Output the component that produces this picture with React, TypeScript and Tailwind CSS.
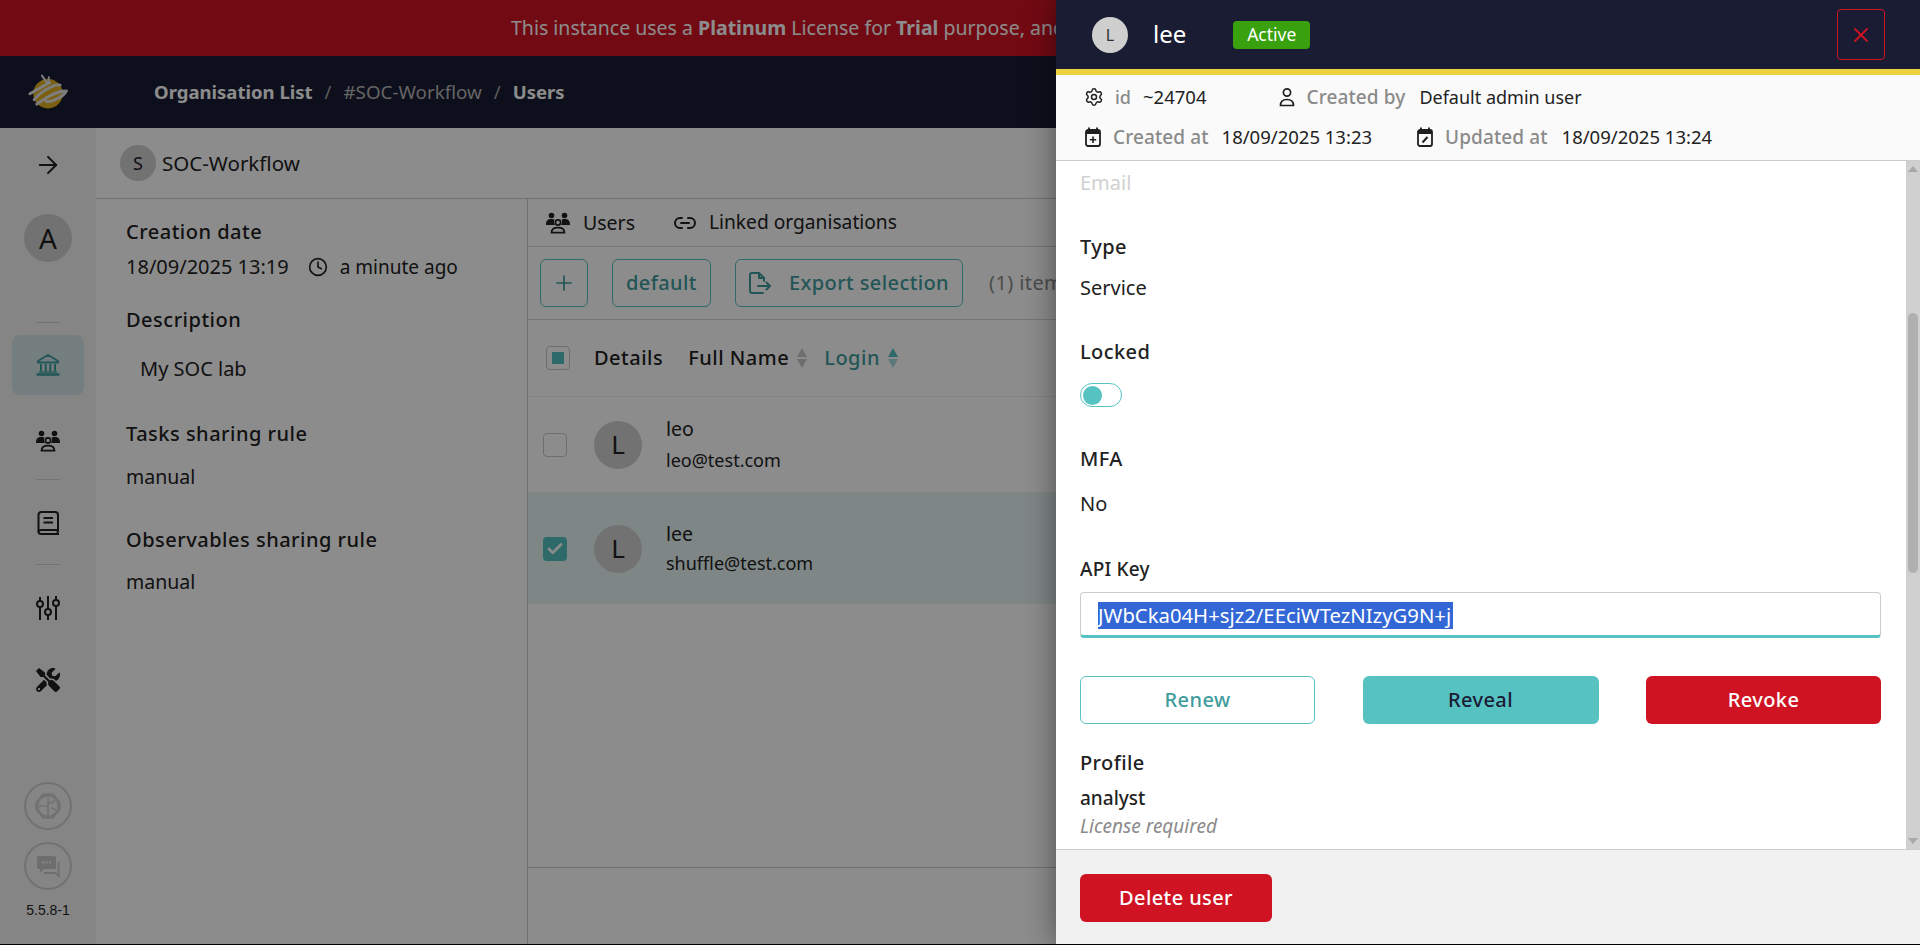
import React from 'react';
import { ArrowRight, Clock, Link2, Plus, Settings, Check, X } from 'lucide-react';
import { FaTools } from 'react-icons/fa';

const Logo = () => (
  <svg width="42" height="38" viewBox="0 0 48 44" fill="none">
    <circle cx="24" cy="24" r="17" fill="#e2b01f" />
    <g stroke="#e4e4e4" strokeWidth="3.4" strokeLinecap="round">
      <path d="M3 24 L26 11 M8 31 C12 25 30 12 38 14 M11 36 C20 30 34 20 45 21 C43 26 30 34 22 33" />
      <path d="M17 3 L24 13 M25 5 L24 12" strokeWidth="2.4" />
    </g>
  </svg>
);

const BankIcon = () => (
  <svg width="24" height="24" viewBox="0 0 24 24" fill="none" stroke="currentColor" strokeWidth="2">
    <path d="M12 2 L22 8 V9.5 H2 V8 Z" strokeLinejoin="round" />
    <path d="M5 11 V18 M9.7 11 V18 M14.3 11 V18 M19 11 V18" />
    <path d="M0.5 21.5 H23.5" strokeWidth="2.6" />
    <path d="M3 19 H21" strokeWidth="1.4" />
  </svg>
);

const GroupIcon = () => (
  <svg width="24" height="24" viewBox="0 0 24 24" fill="currentColor">
    <circle cx="5.5" cy="4.5" r="2.8" />
    <circle cx="18.5" cy="4.5" r="2.8" />
    <path d="M0 14 C0 9 2 8 5.5 8 C7 8 8 8.3 8.6 8.8 C7.6 10 7.8 12.2 9 14 Z" />
    <path d="M24 14 C24 9 22 8 18.5 8 C17 8 16 8.3 15.4 8.8 C16.4 10 16.2 12.2 15 14 Z" />
    <circle cx="12" cy="11.5" r="2.6" fill="none" stroke="currentColor" strokeWidth="1.7" />
    <path d="M5.5 21.7 C5.5 18 8 16.6 12 16.6 C16 16.6 18.5 18 18.5 21.7 Z" fill="none" stroke="currentColor" strokeWidth="1.7" />
  </svg>
);

const BookIcon = () => (
  <svg width="24" height="24" viewBox="0 0 24 24" fill="none" stroke="currentColor" strokeWidth="2">
    <path d="M22 19 H5.5 C3 19 2.5 20 2.5 21 C2.5 22.4 3.5 23 5.5 23 H23" />
    <path d="M2.5 21 V4 C2.5 2 3.5 1 5.5 1 H19 C21 1 22 2 22 4 V19 L21.5 22" />
    <path d="M7.5 7 H17 M7.5 11.5 H17" strokeWidth="2.2" />
  </svg>
);

const SlidersIcon = () => (
  <svg width="24" height="24" viewBox="0 0 24 24" fill="none" stroke="currentColor" strokeWidth="2">
    <path d="M4 1 V5 M4 11 V24 M12 0 V13 M12 19 V24 M20 0 V4 M20 10 V24" />
    <circle cx="4" cy="8" r="3" />
    <circle cx="12" cy="16" r="3" />
    <circle cx="20" cy="7" r="3" />
  </svg>
);

const BrainIcon = () => (
  <svg width="26" height="26" viewBox="0 0 26 26" fill="none">
    <path d="M8 1 H18 L25 10 V16 L18 25 H8 L1 16 V10 Z" fill="#cfcfcf" stroke="#cfcfcf" strokeWidth="1.5" strokeLinejoin="round" />
    <circle cx="13" cy="13" r="9.5" fill="#f2f2f2" />
    <path d="M13 3.5 V22.5 M4 14 C8 11 10 14 13 13 M13 9 C15 11 18 10 20 7 M16 15 C18 15 20 17 21 17" stroke="#cfcfcf" strokeWidth="1.6" />
  </svg>
);

const ChatIcon = () => (
  <svg width="24" height="24" viewBox="0 0 24 24" fill="none">
    <path d="M3 2 H18 C19.5 2 20 3 20 4 V13 C20 14.5 19 15 18 15 H8 L4 19 V15 H3 C1.5 15 1 14 1 13 V4 C1 3 1.5 2 3 2 Z" fill="#c9c9c9" />
    <circle cx="7" cy="8.5" r="1.2" fill="#f2f2f2" />
    <circle cx="10.5" cy="8.5" r="1.2" fill="#f2f2f2" />
    <circle cx="14" cy="8.5" r="1.2" fill="#f2f2f2" />
    <path d="M22.5 8 V18 L23 22 L19 19 H8" stroke="#c9c9c9" strokeWidth="1.8" />
  </svg>
);

const ExportIcon = () => (
  <svg width="24" height="24" viewBox="0 0 24 24" fill="none" stroke="currentColor" strokeWidth="2" strokeLinecap="round" strokeLinejoin="round">
    <path d="M15 22 H4 C3 22 2 21 2 20 V4 C2 3 3 2 4 2 H11 L16 7 V10" />
    <path d="M11 2 V7 H16" />
    <path d="M10 15 H22 M18.5 11.5 L22 15 L18.5 18.5" />
  </svg>
);

const PersonIcon = () => (
  <svg width="20" height="20" viewBox="0 0 20 20" fill="none" stroke="#1f1f1f" strokeWidth="1.7">
    <circle cx="10" cy="5.5" r="3.6" />
    <path d="M3.5 18.5 C3.5 14.5 6 12.5 10 12.5 C14 12.5 16.5 14.5 16.5 18.5 Z" />
  </svg>
);

const CalIcon = ({ edit }: { edit?: boolean }) => (
  <svg width="18" height="20" viewBox="0 0 18 20" fill="none">
    <rect x="2" y="3" width="14" height="16" rx="2" stroke="#1f1f1f" strokeWidth="1.8" />
    <path d="M2 3 H16 V7 H2 Z" fill="#1f1f1f" />
    <path d="M5 0.5 V4 M13 0.5 V4" stroke="#1f1f1f" strokeWidth="1.8" />
    {edit ? (
      <path d="M6.5 15.5 L11.5 10" stroke="#1f1f1f" strokeWidth="2" />
    ) : (
      <path d="M9 9.5 V16 M5.8 12.8 H12.2" stroke="#1f1f1f" strokeWidth="1.6" />
    )}
  </svg>
);

const SortArrows = ({ active }: { active?: boolean }) => (
  <span className="flex flex-col gap-[2px] ml-[8px]">
    <span className={`w-0 h-0 border-x-[5px] border-x-transparent border-b-[9px] ${active ? 'border-b-[#56c2c2]' : 'border-b-[#c8c8c8]'}`}></span>
    <span className={`w-0 h-0 border-x-[5px] border-x-transparent border-t-[9px] ${active ? 'border-t-[#a8dcdc]' : 'border-t-[#c8c8c8]'}`}></span>
  </span>
);

const Avatar = ({ letter }: { letter: string }) => (
  <div className="w-12 h-12 rounded-full bg-[#cfcfcf] flex items-center justify-center text-[26px] text-[#222] shrink-0">{letter}</div>
);

const rows = [
  { name: 'leo', email: 'leo@test.com', selected: false },
  { name: 'lee', email: 'shuffle@test.com', selected: true },
];

const MainPage = () => (
  <div className="h-[944px] flex flex-col bg-white">
    <div className="h-14 shrink-0 bg-[#d01323] text-white text-[19.5px] leading-[56px] pl-[511px] whitespace-nowrap overflow-hidden">
      This instance uses a <b>Platinum</b> License for <b>Trial</b> purpose, and
    </div>
    <div className="h-[72px] shrink-0 bg-[#1a1c33] flex items-center text-[18.5px] text-white">
      <div className="w-[154px] pl-[27px]"><Logo /></div>
      <span className="font-bold">Organisation List</span>
      <span className="mx-[12px] text-[#a8a8a8]">/</span>
      <span className="text-[#b8b8b8] text-[18.8px]">#SOC-Workflow</span>
      <span className="mx-[12px] text-[#a8a8a8]">/</span>
      <span className="font-bold">Users</span>
    </div>
    <div className="flex-1 flex min-h-0">
      <aside className="w-24 shrink-0 bg-[#f2f2f2] flex flex-col items-center pt-[25px] pb-6 text-[#1f1f1f]">
        <ArrowRight size={28} strokeWidth={1.7} className="my-[-2px]" />
        <div className="w-12 h-12 mt-[37px] rounded-full bg-[#cfcfcf] flex items-center justify-center text-[28px]">A</div>
        <div className="w-6 h-px bg-[#d0d0d0] mt-[60px]"></div>
        <div className="w-[72px] h-[60px] mt-3 rounded-lg bg-[#d3e6e6] flex items-center justify-center text-[#3f9c9c]"><BankIcon /></div>
        <div className="mt-[34px]"><GroupIcon /></div>
        <div className="w-6 h-px bg-[#d0d0d0] mt-[26px]"></div>
        <div className="mt-[31px]"><BookIcon /></div>
        <div className="w-6 h-px bg-[#d0d0d0] mt-[29px]"></div>
        <div className="mt-[31px]"><SlidersIcon /></div>
        <div className="mt-[48px]"><FaTools size={24} /></div>
        <div className="mt-auto w-12 h-12 rounded-full border-2 border-[#cfcfcf] flex items-center justify-center"><BrainIcon /></div>
        <div className="mt-3 w-12 h-12 rounded-full border-2 border-[#cfcfcf] flex items-center justify-center"><ChatIcon /></div>
        <div className="mt-[10px] text-[14px] leading-5 font-['Liberation_Sans',sans-serif]">5.5.8-1</div>
      </aside>
      <div className="flex-1 flex flex-col min-w-0">
        <div className="h-[71px] shrink-0 border-b border-[#ccc] flex items-center pl-6 gap-[6px] text-[20.5px] text-[#222]">
          <div className="w-9 h-9 rounded-full bg-[#cfcfcf] flex items-center justify-center text-[18px]">S</div>
          SOC-Workflow
        </div>
        <div className="flex-1 flex min-h-0 text-[#222]">
          <div className="w-[432px] shrink-0 border-r border-[#ccc] pl-[30px] text-[19.5px]">
            <div className="mt-[21px] leading-6 text-[20px] tracking-[0.5px] font-medium">Creation date</div>
            <div className="mt-[11px] leading-6 flex items-center text-[20px]">
              18/09/2025 13:19
              <Clock size={20} className="ml-[19px] mr-[12px]" />
              <span className="text-[19px]">a minute ago</span>
            </div>
            <div className="mt-[29px] leading-6 text-[20px] tracking-[0.5px] font-medium">Description</div>
            <div className="mt-[25px] ml-[14px] leading-6 text-[20px]">My SOC lab</div>
            <div className="mt-[41px] leading-6 text-[20px] tracking-[0.5px] font-medium">Tasks sharing rule</div>
            <div className="mt-[19px] leading-6">manual</div>
            <div className="mt-[39px] leading-6 text-[20px] tracking-[0.5px] font-medium">Observables sharing rule</div>
            <div className="mt-[18px] leading-6">manual</div>
          </div>
          <div className="flex-1 flex flex-col min-w-0">
            <div className="h-12 shrink-0 border-b border-[#d8d8d8] flex items-center pl-[18px] text-[19.5px]">
              <GroupIcon />
              <span className="ml-[13px]">Users</span>
              <Link2 size={24} strokeWidth={2} className="ml-[38px]" />
              <span className="ml-[12px] text-[19.2px]">Linked organisations</span>
            </div>
            <div className="h-[73px] shrink-0 border-b border-[#d8d8d8] flex items-center pl-3 text-[20px] tracking-[0.4px] font-medium text-[#3f9c9c]">
              <button className="w-12 h-12 border border-[#56c2c2] rounded-md flex items-center justify-center"><Plus size={24} strokeWidth={1.7} /></button>
              <button className="h-12 w-[99px] ml-6 border border-[#56c2c2] rounded-md">default</button>
              <button className="h-12 w-[228px] ml-6 border border-[#56c2c2] rounded-md flex items-center pl-[12px]">
                <ExportIcon /><span className="ml-[17px]">Export selection</span>
              </button>
              <span className="ml-[26px] font-normal text-[#8a8a8a] whitespace-nowrap">(1) items</span>
            </div>
            <div className="h-[76px] shrink-0 flex items-center pl-[18px] text-[20px] tracking-[0.5px] font-medium">
              <span className="w-6 h-6 border border-[#c8c8c8] rounded flex items-center justify-center"><span className="w-[12px] h-[12px] bg-[#56c2c2]"></span></span>
              <span className="ml-[24px]">Details</span>
              <span className="ml-[25px]">Full Name</span>
              <SortArrows />
              <span className="ml-[17px] text-[#3f9c9c]">Login</span>
              <SortArrows active />
            </div>
            {rows.map((row) => (
              <div key={row.name} className={`flex items-center pl-[15px] border-t border-[#f0f0f0] ${row.selected ? 'h-[112px] bg-[#e8f5f5]' : 'h-24'}`}>
                <span className={`w-6 h-6 rounded flex items-center justify-center ${row.selected ? 'bg-[#56c2c2] text-white' : 'border border-[#c8c8c8]'}`}>
                  {row.selected && <Check size={18} strokeWidth={3.5} />}
                </span>
                <div className="ml-[27px]"><Avatar letter="L" /></div>
                <div className="ml-[24px] text-[18px]">
                  <div className="leading-6 text-[19.5px]">{row.name}</div>
                  <div className={`leading-6 ${row.selected ? 'mt-[5px]' : 'mt-[7px]'}`}>{row.email}</div>
                </div>
              </div>
            ))}
            <div className="mt-[263px] border-t border-[#ccc]"></div>
          </div>
        </div>
      </div>
    </div>
  </div>
);

const Drawer = () => (
  <div className="absolute top-0 right-0 w-[864px] h-[944px] flex flex-col bg-white shadow-[0_0_28px_rgba(0,0,0,0.45)] text-[#222] text-[20px]">
    <div className="h-[75px] shrink-0 bg-[#1a1c33] border-b-[6px] border-[#ead33f] flex items-center pl-9 pr-[35px] text-white">
      <div className="w-9 h-9 rounded-full bg-[#cfcfcf] text-[#333] flex items-center justify-center text-[16px]">L</div>
      <span className="ml-[25px] text-[24px] mt-[-2px]">lee</span>
      <span className="ml-[47px] h-7 w-[77px] rounded bg-[#38a10d] flex items-center justify-center text-[17.5px]">Active</span>
      <button className="ml-auto w-12 h-[51px] border border-[#d01323] rounded text-[#d01323] flex items-center justify-center"><X size={24} strokeWidth={1.8} /></button>
    </div>
    <div className="h-[86px] shrink-0 bg-[#fafafa] border-b border-[#ccc] pl-7 text-[18.5px]">
      <div className="h-[22px] mt-[11px] flex items-center">
        <Settings size={20} strokeWidth={1.8} />
        <span className="ml-[11px] text-[#8a8a8a] font-medium text-[18px]">id</span>
        <span className="ml-[12px]">~24704</span>
        <span className="ml-[70px]"><PersonIcon /></span>
        <span className="ml-[10px] text-[#8a8a8a] font-medium text-[19px] tracking-[0.1px]">Created by</span>
        <span className="ml-[14px] text-[18px]">Default admin user</span>
      </div>
      <div className="h-[22px] mt-[18px] flex items-center">
        <CalIcon />
        <span className="ml-[11px] text-[#8a8a8a] font-medium text-[19px] tracking-[0.1px]">Created at</span>
        <span className="ml-[13px]">18/09/2025 13:23</span>
        <span className="ml-[44px]"><CalIcon edit /></span>
        <span className="ml-[11px] text-[#8a8a8a] font-medium text-[19px] tracking-[0.1px]">Updated at</span>
        <span className="ml-[14px]">18/09/2025 13:24</span>
      </div>
    </div>
    <div className="flex-1 min-h-0 flex">
      <div className="flex-1 min-w-0 pl-6 pr-[25px] pt-[10px] overflow-hidden">
        <div className="leading-6 text-[#d0d0d0]">Email</div>
        <div className="mt-10 leading-6 tracking-[0.4px] font-medium">Type</div>
        <div className="mt-[17px] leading-6">Service</div>
        <div className="mt-10 leading-6 tracking-[0.4px] font-medium">Locked</div>
        <div className="mt-[19px] w-[42px] h-6 rounded-full border border-[#56c2c2] flex items-center pl-[2px]">
          <span className="w-[19px] h-[19px] rounded-full bg-[#56c2c2]"></span>
        </div>
        <div className="mt-[40px] leading-6 tracking-[0.4px] font-medium">MFA</div>
        <div className="mt-[21px] leading-6">No</div>
        <div className="mt-[41px] leading-6 text-[19px] tracking-[0.2px] font-medium">API Key</div>
        <div className="mt-[11px] h-[46px] border border-[#ccc] border-b-[3px] border-b-[#56c2c2] rounded flex items-start pl-[17px] pt-[9px] overflow-hidden">
          <span className="block h-[27px] w-[355px] bg-[#3367d6] text-white text-[20.3px] leading-[27px] whitespace-nowrap overflow-hidden">JWbCka04H+sjz2/EEciWTezNIzyG9N+j</span>
        </div>
        <div className="mt-[38px] flex justify-between text-[20px] tracking-[0.4px] font-medium">
          <button className="w-[235px] h-12 rounded-md border border-[#56c2c2] text-[#3f9c9c]">Renew</button>
          <button className="w-[236px] h-12 rounded-md bg-[#56c2c2] text-[#1a1c33]">Reveal</button>
          <button className="w-[235px] h-12 rounded-md bg-[#d01323] text-white">Revoke</button>
        </div>
        <div className="mt-[27px] leading-6 tracking-[0.4px] font-medium">Profile</div>
        <div className="mt-[11px] leading-6 text-[19px] font-medium">analyst</div>
        <div className="mt-1 leading-6 text-[19px] italic text-[#8a8a8a]">License required</div>
      </div>
      <div className="w-[14px] shrink-0 bg-[#d0d0d0] flex flex-col items-center justify-between py-[5px] relative">
        <span className="w-0 h-0 border-x-[5px] border-x-transparent border-b-[6px] border-b-[#a8a8a8]"></span>
        <span className="absolute top-[152px] left-[2px] w-[10px] h-[260px] rounded-full bg-[#b0b0b0]"></span>
        <span className="w-0 h-0 border-x-[5px] border-x-transparent border-t-[6px] border-t-[#a8a8a8]"></span>
      </div>
    </div>
    <div className="h-[95px] shrink-0 bg-[#f1f1f1] border-t border-[#ccc] pl-6 pt-6">
      <button className="w-[192px] h-12 rounded-md bg-[#d01323] text-white text-[20px] tracking-[0.4px] font-medium">Delete user</button>
    </div>
  </div>
);

export default function App() {
  return (
    <div className="relative h-[945px] overflow-hidden bg-black font-['Noto_Sans',sans-serif]">
      <MainPage />
      <div className="absolute top-0 left-0 right-0 h-[944px] bg-black/45"></div>
      <Drawer />
    </div>
  );
}
